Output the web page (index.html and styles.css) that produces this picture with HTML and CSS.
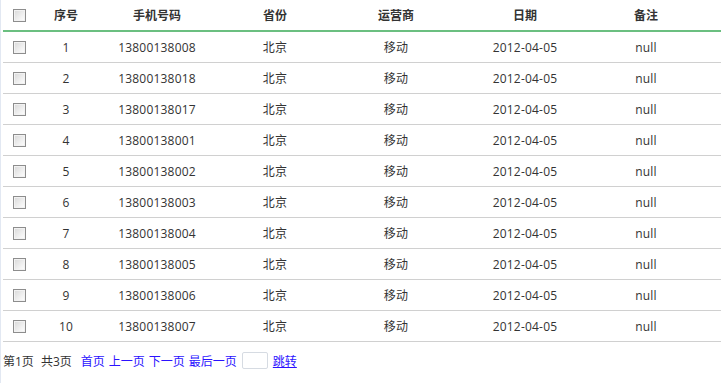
FILE: index.html
```html
<!DOCTYPE html>
<html lang="zh-CN">
<head>
<meta charset="utf-8">
<title>列表</title>
<link rel="stylesheet" href="styles.css">
</head>
<body>
<div class="wrap">
  <table class="grid">
    <colgroup>
      <col class="c-chk"><col class="c-no"><col class="c-phone"><col class="c-prov"><col class="c-op"><col class="c-date"><col class="c-note">
    </colgroup>
    <thead>
      <tr>
        <th><input type="checkbox" class="chk"></th>
        <th>序号</th><th>手机号码</th><th>省份</th><th>运营商</th><th>日期</th><th class="note">备注</th>
      </tr>
    </thead>
    <tbody>
      <tr><td><input type="checkbox" class="chk"></td><td>1</td><td>13800138008</td><td>北京</td><td>移动</td><td>2012-04-05</td><td class="note">null</td></tr>
      <tr><td><input type="checkbox" class="chk"></td><td>2</td><td>13800138018</td><td>北京</td><td>移动</td><td>2012-04-05</td><td class="note">null</td></tr>
      <tr><td><input type="checkbox" class="chk"></td><td>3</td><td>13800138017</td><td>北京</td><td>移动</td><td>2012-04-05</td><td class="note">null</td></tr>
      <tr><td><input type="checkbox" class="chk"></td><td>4</td><td>13800138001</td><td>北京</td><td>移动</td><td>2012-04-05</td><td class="note">null</td></tr>
      <tr><td><input type="checkbox" class="chk"></td><td>5</td><td>13800138002</td><td>北京</td><td>移动</td><td>2012-04-05</td><td class="note">null</td></tr>
      <tr><td><input type="checkbox" class="chk"></td><td>6</td><td>13800138003</td><td>北京</td><td>移动</td><td>2012-04-05</td><td class="note">null</td></tr>
      <tr><td><input type="checkbox" class="chk"></td><td>7</td><td>13800138004</td><td>北京</td><td>移动</td><td>2012-04-05</td><td class="note">null</td></tr>
      <tr><td><input type="checkbox" class="chk"></td><td>8</td><td>13800138005</td><td>北京</td><td>移动</td><td>2012-04-05</td><td class="note">null</td></tr>
      <tr><td><input type="checkbox" class="chk"></td><td>9</td><td>13800138006</td><td>北京</td><td>移动</td><td>2012-04-05</td><td class="note">null</td></tr>
      <tr><td><input type="checkbox" class="chk"></td><td>10</td><td>13800138007</td><td>北京</td><td>移动</td><td>2012-04-05</td><td class="note">null</td></tr>
    </tbody>
  </table>
  <div class="pager">
    <span class="info">第1页</span>
    <span class="info total">共3页</span>
    <a class="plink" href="#">首页</a>
    <a class="plink" href="#">上一页</a>
    <a class="plink" href="#">下一页</a>
    <a class="plink" href="#">最后一页</a>
    <input type="text" class="jump-input">
    <a class="jump" href="#">跳转</a>
  </div>
</div>
</body>
</html>
```

FILE: styles.css
```css
html, body {
  margin: 0;
  padding: 0;
  background: #fff;
}
body {
  font-family: "Open Sans", "Noto Sans CJK SC", sans-serif;
  font-size: 12px;
  color: #333;
}
.wrap {
  border-left: 1px solid #e2e8f2;
  padding-left: 2px;
  height: 383px;
  box-sizing: border-box;
}
.grid {
  width: 718px;
  border-collapse: collapse;
  table-layout: fixed;
}
.c-chk { width: 33px; }
.c-no { width: 60px; }
.c-phone { width: 122px; }
.c-prov { width: 114px; }
.c-op { width: 128px; }
.c-date { width: 130px; }
.c-note { width: 131px; }
.grid th {
  height: 30px;
  padding: 0;
  font-weight: bold;
  text-align: center;
  border-bottom: 2px solid #6bbf80;
  color: #333;
}
.grid td {
  height: 30px;
  padding: 0;
  text-align: center;
  border-bottom: 1px solid #d0d0d0;
  letter-spacing: 0.2px;
}
.grid .note {
  padding-right: 19px;
}
.chk {
  appearance: none;
  -webkit-appearance: none;
  width: 13px;
  height: 13px;
  display: block;
  margin: 0 auto;
  box-sizing: border-box;
  border: 1px solid #8d8d8d;
  background: linear-gradient(135deg, #d8d8d8 0%, #f0f0f0 60%, #ffffff 100%);
  box-shadow: inset 0 0 0 1px #f2f2f2;
}
.pager {
  display: flex;
  align-items: center;
  height: 36px;
  padding-top: 1px;
  box-sizing: border-box;
}
.info {
  margin-right: 7px;
}
.total {
  margin-right: 9px;
}
.plink {
  color: #2b13ff;
  text-decoration: none;
  margin-right: 4px;
}
.jump-input {
  width: 26px;
  height: 17px;
  box-sizing: border-box;
  border: 1px solid #d6dbe2;
  border-radius: 2px;
  margin: 0 5px 0 1px;
  padding: 0;
}
.jump {
  color: #2b13ff;
  text-decoration: underline;
}
```
